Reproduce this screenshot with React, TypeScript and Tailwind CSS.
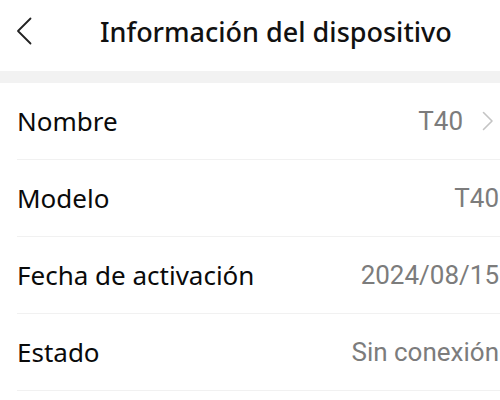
const rows: { label: string; value: string; link?: boolean }[] = [
  { label: "Nombre", value: "T40", link: true },
  { label: "Modelo", value: "T40" },
  { label: "Fecha de activación", value: "2024/08/15" },
  { label: "Estado", value: "Sin conexión" },
];

export default function App() {
  return (
    <div className="h-[400px] w-[500px] overflow-hidden bg-white font-['Noto_Sans',sans-serif]">
      <div className="flex h-[71px] items-center pb-[9px] pl-[16px]">
        <svg width="16" height="28" viewBox="0 0 16 28" fill="none" className="text-[#222]">
          <path d="M14.5 1.5 2 14l12.5 12.5" stroke="currentColor" strokeWidth="1.8" strokeLinecap="round" strokeLinejoin="round" />
        </svg>
        <h1 className="ml-[68px] text-[27px] font-medium leading-none text-[#111]">Información del dispositivo</h1>
      </div>
      <div className="h-3 bg-[#f2f2f2]" />
      <div className="pl-[17px]">
        {rows.map(({ label, value, link }) => (
          <div
            key={label}
            className="flex h-[77px] items-center justify-between border-b border-[#f1f1f1] pr-[1px]"
          >
            <span className="text-[26px] text-[#0a0a0a]">{label}</span>
            <span className="flex items-center font-['Roboto',sans-serif] text-[26px] text-[#7c7c7c]">
              {value}
              {link && (
                <svg width="12" height="20" viewBox="0 0 12 20" fill="none" className="ml-[19px] mr-[5px] text-[#c4c4c4]">
                  <path d="M1.5 1.5 10 10l-8.5 8.5" stroke="currentColor" strokeWidth="1.6" strokeLinecap="round" strokeLinejoin="round" />
                </svg>
              )}
            </span>
          </div>
        ))}
      </div>
    </div>
  );
}
